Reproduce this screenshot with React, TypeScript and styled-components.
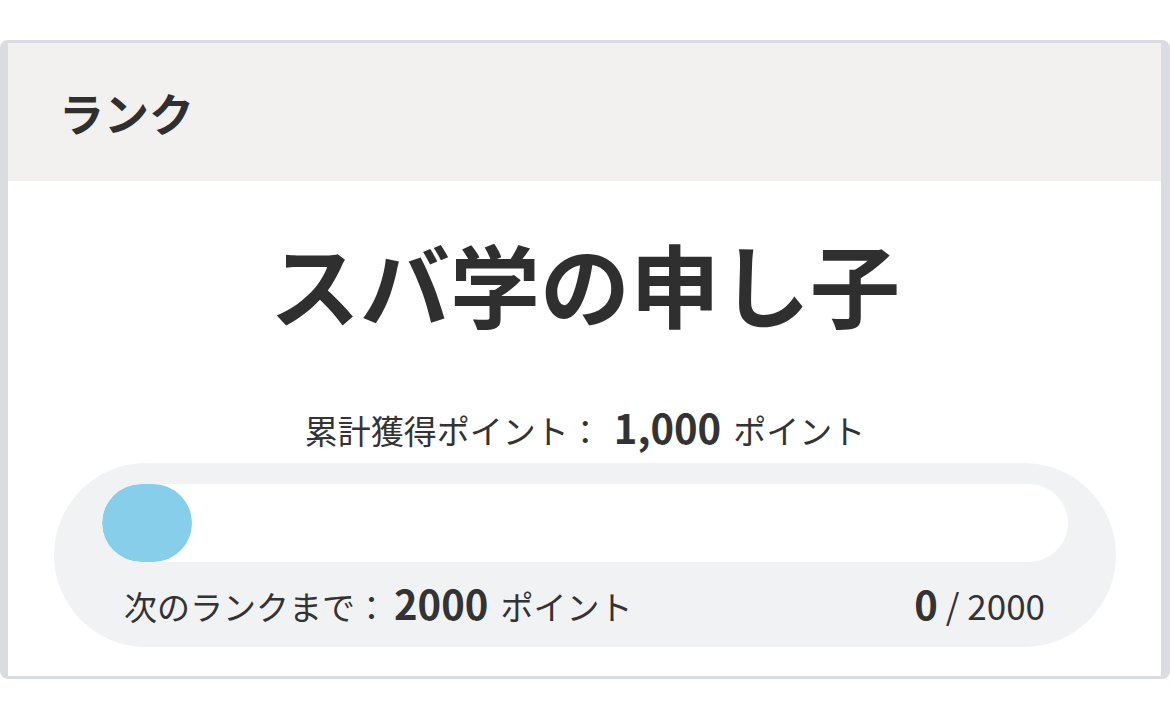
import React from "react";
import styled, { createGlobalStyle } from "styled-components";

const Global = createGlobalStyle`
  html, body { margin: 0; padding: 0; background: #ffffff; }
  body { font-family: "Noto Sans CJK JP", "Noto Sans", sans-serif; color: #333333; }
`;

const Page = styled.div`
  padding-top: 40px;
  width: 1170px;
`;

const Card = styled.section`
  box-sizing: border-box;
  width: 1170px;
  border-style: solid;
  border-color: #d9dde1;
  border-width: 3px 9px 3px 8px;
  border-radius: 8px;
  overflow: hidden;
  background: #ffffff;
`;

const Header = styled.header`
  height: 138px;
  background: #f2f1f0;
  display: flex;
  align-items: center;
  padding-left: 51px;
`;

const HeaderTitle = styled.h2`
  margin: 0;
  font-size: 45px;
  font-weight: 700;
  color: #2f2f2f;
  line-height: 1;
`;

const Body = styled.div`
  display: flex;
  flex-direction: column;
  align-items: stretch;
  padding: 35px 45px 29px 46px;
`;

const RankName = styled.h1`
  margin: 0;
  text-align: center;
  font-size: 90px;
  font-weight: 700;
  line-height: 132px;
  color: #2f2f2f;
`;

const TotalLine = styled.p`
  margin: 55px 0 9px;
  text-align: center;
  line-height: 48px;
  font-size: 33px;
  color: #333333;
`;

const Strong = styled.strong<{ $before?: number }>`
  font-size: 40px;
  font-weight: 700;
  margin: 0 12px 0 ${(p) => (p.$before ?? 12)}px;
`;

const ProgressBox = styled.div`
  background: #f1f2f4;
  border-radius: 92px;
  padding: 21px 48px 17px;
  display: flex;
  flex-direction: column;
`;

const Track = styled.div`
  height: 78px;
  background: #ffffff;
  border-radius: 39px;
  overflow: hidden;
`;

const Fill = styled.div`
  height: 100%;
  background: #87ceeb;
  border-radius: 39px;
`;

const Row = styled.div`
  margin-top: 17px;
  display: flex;
  justify-content: space-between;
  align-items: baseline;
  padding: 0 23px 0 22px;
  line-height: 48px;
  font-size: 33px;
  color: #333333;
`;

const Count = styled.span`
  font-size: 35px;
`;

const CountStrong = styled.strong`
  font-size: 40px;
  font-weight: 700;
`;

export default function App() {
  const current = 0;
  const goal = 2000;
  const pct = current / goal;
  const fillWidth = `max(90px, ${pct * 100}%)`;
  return (
    <>
      <Global />
      <Page>
        <Card>
          <Header>
            <HeaderTitle>ランク</HeaderTitle>
          </Header>
          <Body>
            <RankName>スバ学の申し子</RankName>
            <TotalLine>
              累計獲得ポイント：<Strong>1,000</Strong>ポイント
            </TotalLine>
            <ProgressBox>
              <Track>
                <Fill style={{ width: fillWidth }} />
              </Track>
              <Row>
                <span>
                  次のランクまで：<Strong $before={6}>2000</Strong>ポイント
                </span>
                <Count>
                  <CountStrong>0</CountStrong> / 2000
                </Count>
              </Row>
            </ProgressBox>
          </Body>
        </Card>
      </Page>
    </>
  );
}
